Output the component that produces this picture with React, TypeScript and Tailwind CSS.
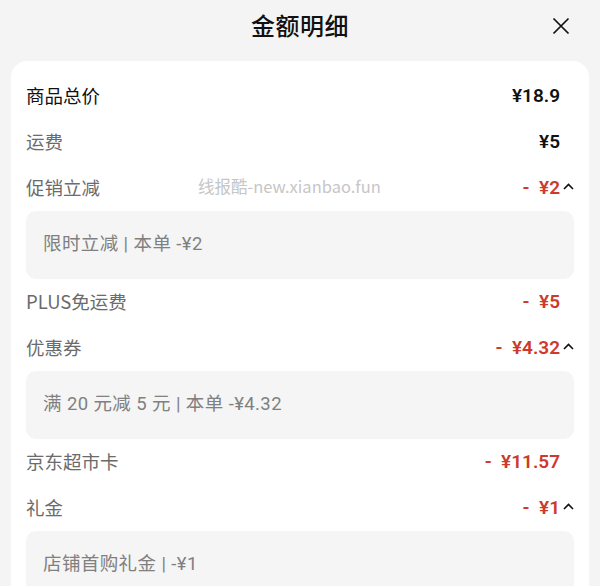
import React from 'react';

type Row = {
  label: string;
  value: string;
  red?: boolean;
  dark?: boolean;
  detail?: string;
};

const rows: Row[] = [
  { label: '商品总价', value: '¥18.9', dark: true },
  { label: '运费', value: '¥5' },
  { label: '促销立减', value: '- ¥2', red: true, detail: '限时立减 | 本单 -¥2' },
  { label: 'PLUS免运费', value: '- ¥5', red: true },
  { label: '优惠券', value: '- ¥4.32', red: true, detail: '满 20 元减 5 元 | 本单 -¥4.32' },
  { label: '京东超市卡', value: '- ¥11.57', red: true },
  { label: '礼金', value: '- ¥1', red: true, detail: '店铺首购礼金 | -¥1' },
];

const font = { fontFamily: '"Noto Sans CJK SC", "Noto Sans", sans-serif' };

const Chevron = () => (
  <svg width="11" height="7" viewBox="0 0 11 7" className="ml-[3px] mb-[3px]">
    <polyline points="1,6 5.5,1.5 10,6" fill="none" stroke="#111" strokeWidth="1.6" />
  </svg>
);

export default function App() {
  return (
    <div className="w-[600px] h-[586px] overflow-hidden bg-[#f4f4f4] relative" style={font}>
      <div className="h-[61px] flex items-center justify-center relative">
        <h1 className="text-[24px] font-medium text-[#111] tracking-[0.5px] -mt-[12px]">金额明细</h1>
        <svg width="18" height="18" viewBox="0 0 18 18" className="absolute left-[552px] top-[17px]">
          <path d="M1.5 1.5 L16.5 16.5 M16.5 1.5 L1.5 16.5" stroke="#111" strokeWidth="1.7" />
        </svg>
      </div>
      <div className="mx-[11px] bg-white rounded-[16px] pt-[12px] px-[15px] pb-6">
        {rows.map((r) => (
          <div key={r.label}>
            <div className="h-[46px] flex items-center justify-between">
              <span className={`text-[18.5px] ${r.dark ? 'text-[#111]' : 'text-[#6b6b6b]'}`}>{r.label}</span>
              <div className="flex items-center">
                <span
                  className={`text-[19px] font-semibold whitespace-pre ${r.red ? 'text-[#cc3a2b]' : 'text-[#111]'} ${r.detail ? '' : 'mr-[14px]'}`}
                  style={{ fontFamily: 'Roboto, "Noto Sans", sans-serif' }}
                >
                  {r.value.replace('- ', '-  ')}
                </span>
                {r.detail && <Chevron />}
              </div>
            </div>
            {r.detail && (
              <div className="h-[68px] rounded-[10px] bg-[#f5f5f5] flex items-center px-[17px]">
                <span
                  className="text-[18.5px] text-[#808080] tracking-[0.4px]"
                  style={{ fontFamily: 'Roboto, "Noto Sans CJK SC", sans-serif' }}
                >
                  {r.detail}
                </span>
              </div>
            )}
          </div>
        ))}
      </div>
      <div className="absolute left-[198px] top-[174px] text-[16.5px] text-[#c6c6c6] pointer-events-none">
        线报酷-new.xianbao.fun
      </div>
    </div>
  );
}
